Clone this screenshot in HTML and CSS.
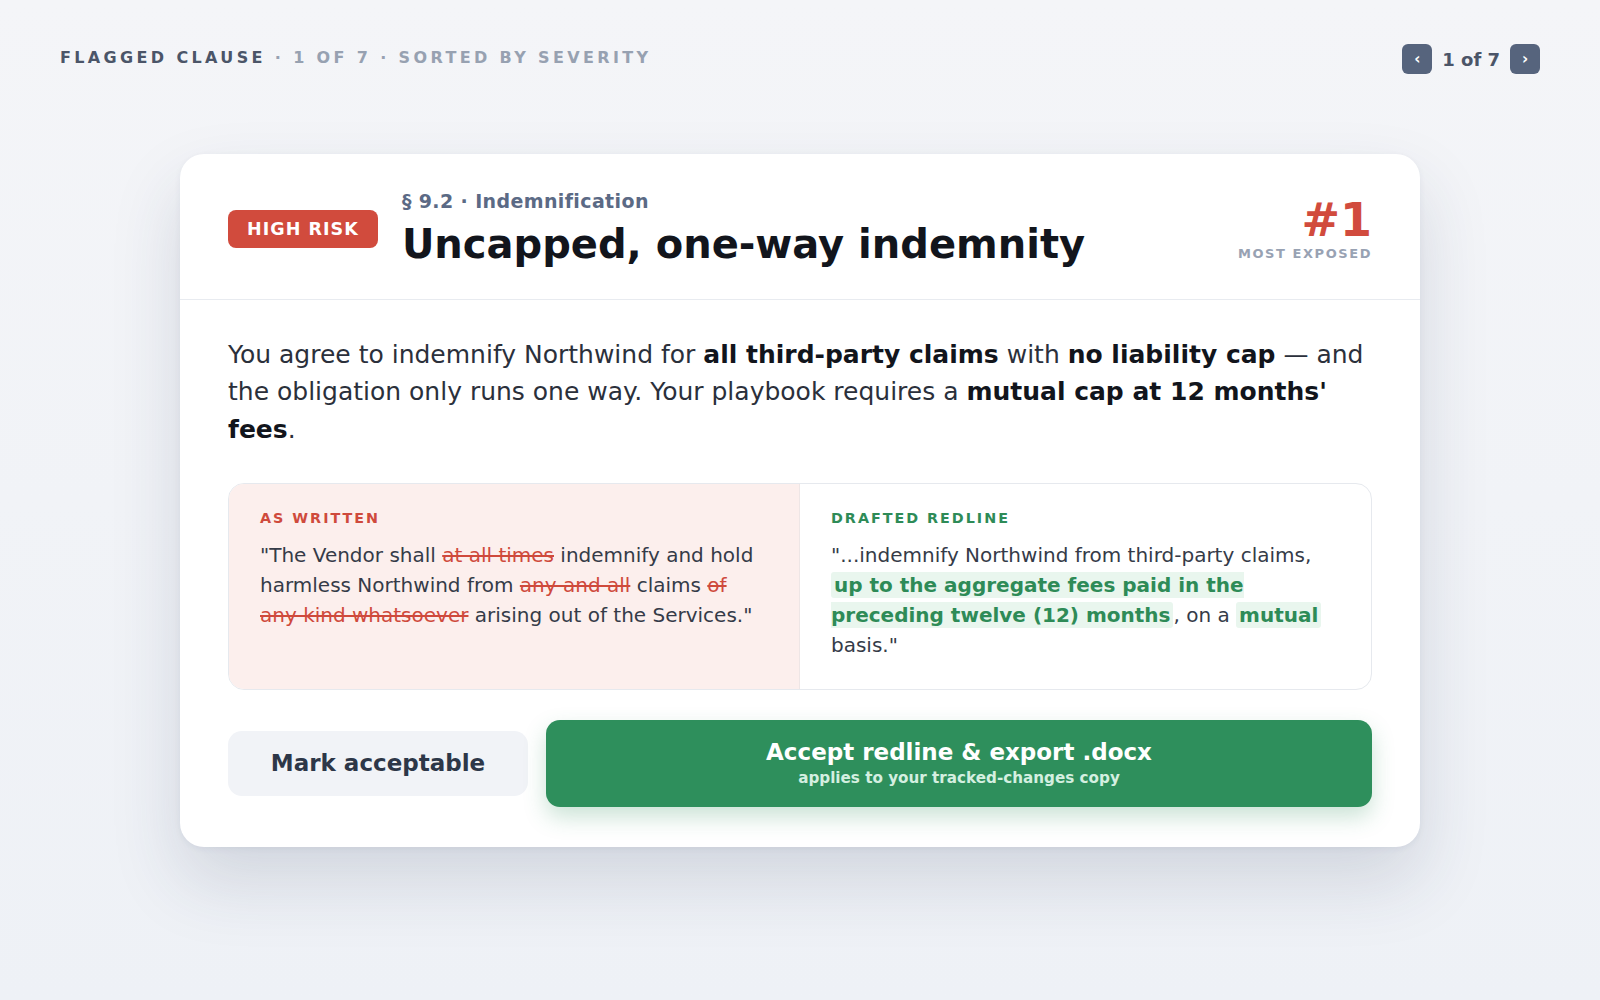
FILE: index.html
```html
<!DOCTYPE html>
<html lang="en">
<head>
    <meta charset="UTF-8">
    <meta name="viewport" content="width=device-width, initial-scale=1.0">
    <title>Flagged clause review</title>
    <link rel="stylesheet" href="styles.css">
</head>
<body>
    <!-- Barra superior -->
    <div class="topbar">
        <div class="crumbs">
            <span class="crumbs-main">Flagged clause</span> · 1 of 7 · Sorted by severity
        </div>
        <div class="pager">
            <button class="pager-btn">&lsaquo;</button>
            <span class="pager-count">1 of 7</span>
            <button class="pager-btn">&rsaquo;</button>
        </div>
    </div>

    <!-- Cartão da cláusula -->
    <div class="card">
        <div class="card-head">
            <span class="risk-badge">HIGH RISK</span>
            <div class="head-text">
                <div class="section-ref">§ 9.2 · Indemnification</div>
                <h1 class="clause-title">Uncapped, one-way indemnity</h1>
            </div>
            <div class="rank">
                <div class="rank-num">#1</div>
                <div class="rank-label">Most exposed</div>
            </div>
        </div>

        <div class="card-body">
            <p class="summary">
                You agree to indemnify Northwind for <b>all third-party claims</b> with <b>no liability cap</b> — and
                the obligation only runs one way. Your playbook requires a <b>mutual cap at 12 months'
                fees</b>.
            </p>

            <div class="compare">
                <div class="compare-col written">
                    <div class="col-label">As written</div>
                    <p class="clause-text">"The Vendor shall <s>at all times</s> indemnify and hold harmless Northwind from <s>any and all</s> claims <s>of any kind whatsoever</s> arising out of the Services."</p>
                </div>
                <div class="compare-col redline">
                    <div class="col-label">Drafted redline</div>
                    <p class="clause-text">"...indemnify Northwind from third-party claims, <mark>up to the aggregate fees paid in the preceding twelve (12) months</mark>, on a <mark>mutual</mark> basis."</p>
                </div>
            </div>

            <div class="actions">
                <button class="btn-secondary">Mark acceptable</button>
                <button class="btn-primary">
                    <span class="btn-title">Accept redline &amp; export .docx</span>
                    <span class="btn-sub">applies to your tracked-changes copy</span>
                </button>
            </div>
        </div>
    </div>
</body>
</html>
```

FILE: styles.css
```css
body {
    margin: 0;
    min-height: 1000px;
    font-family: "DejaVu Sans", "Liberation Sans", sans-serif;
    background: linear-gradient(180deg, #f4f5f8 0%, #eef1f6 100%);
    color: #1f2430;
}

.topbar {
    display: flex;
    justify-content: space-between;
    align-items: center;
    padding: 44px 60px 0 60px;
}

.crumbs {
    font-size: 16px;
    font-weight: bold;
    letter-spacing: 0.21em;
    text-transform: uppercase;
    color: #97a1b1;
    padding-bottom: 4px;
}

.crumbs-main {
    color: #4b5568;
}

.pager {
    display: flex;
    align-items: center;
    gap: 10px;
}

.pager-btn {
    width: 30px;
    height: 30px;
    border: none;
    border-radius: 6px;
    background-color: #56647d;
    color: #fff;
    font-family: inherit;
    font-size: 15px;
    font-weight: bold;
    padding: 0;
}

.pager-count {
    font-size: 18px;
    font-weight: bold;
    color: #4b5568;
}

.card {
    width: 1240px;
    margin: 80px auto 0 auto;
    background-color: #fff;
    border-radius: 24px;
    box-shadow: 0 34px 70px rgba(40, 55, 90, 0.15), 0 2px 6px rgba(40, 55, 90, 0.06);
}

.card-head {
    display: flex;
    align-items: center;
    gap: 24px;
    padding: 36px 48px 31px 48px;
    border-bottom: 1px solid #e8ebf0;
}

.risk-badge {
    background-color: #d14b3d;
    color: #fff;
    font-size: 17.5px;
    font-weight: bold;
    letter-spacing: 0.06em;
    padding: 9px 19px;
    border-radius: 8px;
}

.head-text {
    flex: 1;
}

.section-ref {
    font-size: 19px;
    font-weight: bold;
    color: #5b6a85;
    letter-spacing: 0.02em;
    margin-bottom: 8px;
}

.clause-title {
    margin: 0;
    font-size: 40px;
    line-height: 1.2;
    font-weight: bold;
    color: #12151c;
}

.rank {
    text-align: right;
}

.rank-num {
    font-size: 46px;
    font-weight: bold;
    color: #d14b3d;
    line-height: 1;
}

.rank-label {
    margin-top: 3px;
    font-size: 13px;
    font-weight: bold;
    letter-spacing: 0.12em;
    text-transform: uppercase;
    color: #98a2b3;
}

.card-body {
    padding: 36px 48px 40px 48px;
}

.summary {
    margin: 0 0 35px 0;
    font-size: 25px;
    line-height: 37.3px;
    color: #2b303b;
}

.summary b {
    color: #12151c;
}

.compare {
    display: grid;
    grid-template-columns: 1fr 1fr;
    border: 1px solid #e6e9ee;
    border-radius: 16px;
    overflow: hidden;
}

.compare-col {
    padding: 26px 31px 29px 31px;
}

.compare-col.written {
    background-color: #fcefed;
    border-right: 1px solid #eee6e6;
}

.col-label {
    font-size: 14.3px;
    font-weight: bold;
    letter-spacing: 0.14em;
    text-transform: uppercase;
    margin-bottom: 14px;
}

.written .col-label {
    color: #cf4a3c;
}

.redline .col-label {
    color: #2e8b57;
}

.clause-text {
    margin: 0;
    font-size: 20px;
    line-height: 30px;
    color: #353b48;
}

.clause-text s {
    color: #cf4a3c;
    text-decoration-color: #cf4a3c;
}

.clause-text mark {
    background-color: #e9f6ee;
    color: #2e8b57;
    font-weight: bold;
    padding: 1px 3px;
    border-radius: 3px;
}

.actions {
    display: flex;
    align-items: center;
    gap: 18px;
    margin-top: 30px;
}

.btn-secondary {
    width: 300px;
    height: 65px;
    border: none;
    border-radius: 14px;
    background-color: #f1f3f7;
    color: #2d3748;
    font-family: inherit;
    font-size: 23px;
    font-weight: bold;
}

.btn-primary {
    flex: 1;
    height: 87px;
    border: none;
    border-radius: 14px;
    background-color: #2e8f5c;
    color: #fff;
    font-family: inherit;
    display: flex;
    flex-direction: column;
    align-items: center;
    justify-content: center;
    gap: 4px;
    box-shadow: 0 10px 22px rgba(46, 143, 92, 0.25);
}

.btn-title {
    font-size: 23px;
    font-weight: bold;
}

.btn-sub {
    font-size: 15.2px;
    font-weight: bold;
    color: #d4efe0;
}
```
